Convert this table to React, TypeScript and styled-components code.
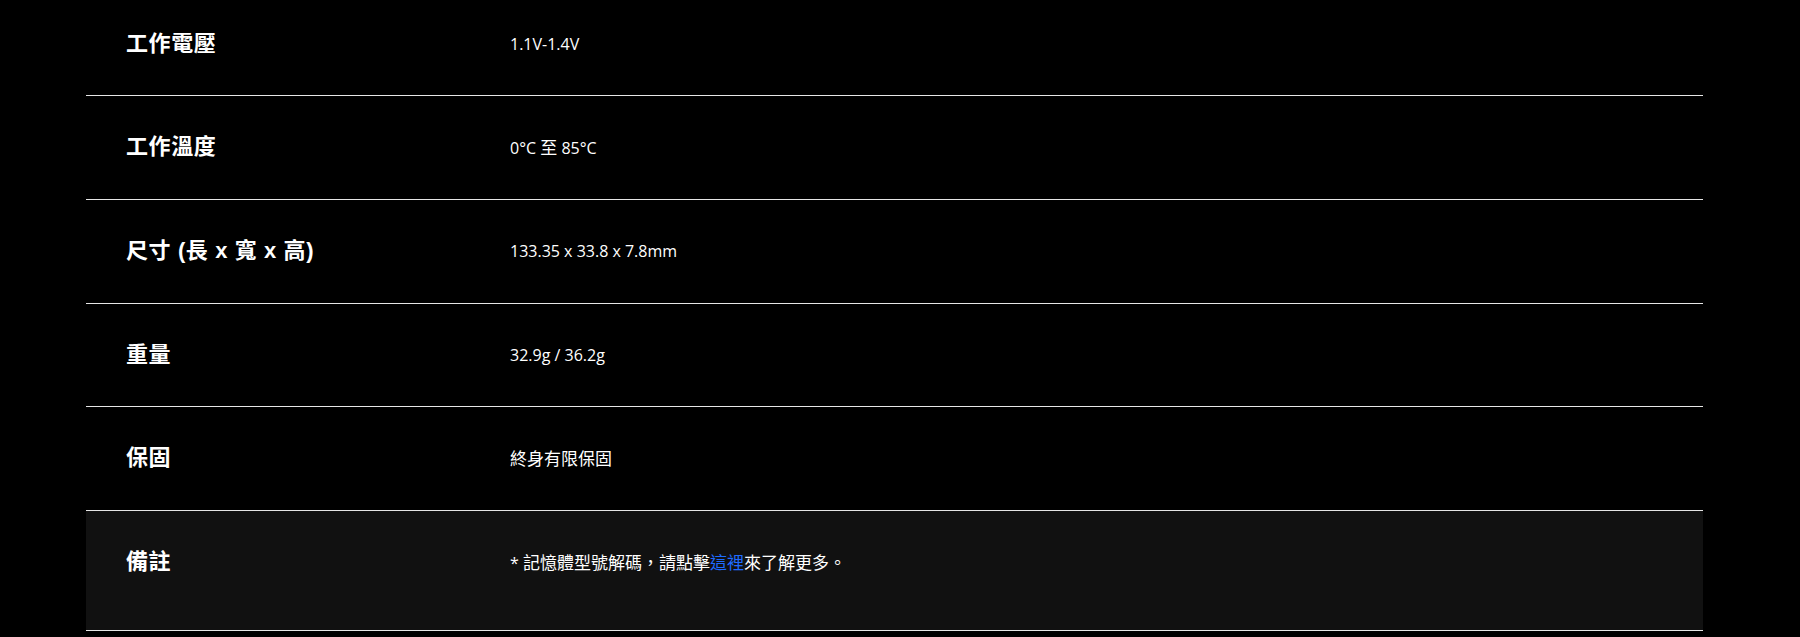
import React from "react";
import styled, { createGlobalStyle } from "styled-components";

const GlobalStyle = createGlobalStyle`
  html, body {
    margin: 0;
    padding: 0;
    background: #000;
    overflow: hidden;
  }
  body {
    font-family: "Open Sans", "Noto Sans CJK TC", sans-serif;
    color: #fff;
  }
`;

const Page = styled.div`
  width: 1800px;
  height: 637px;
  background: #000;
  overflow: hidden;
`;

const Table = styled.div`
  margin-top: -7.4px;
  margin-left: 86px;
  width: 1617px;
  display: flex;
  flex-direction: column;
`;

const Row = styled.div<{ $note?: boolean }>`
  display: grid;
  grid-template-columns: 424px 1fr;
  align-items: start;
  padding: 35px 0 ${(p) => (p.$note ? "51px" : "35px")};
  border-bottom: 1px solid #e6e6e6;
  background: ${(p) => (p.$note ? "#111111" : "transparent")};
`;

const Label = styled.div`
  height: 32.7px;
  padding-left: 40px;
  font-family: "Liberation Sans", "Noto Sans CJK TC", sans-serif;
  font-weight: 700;
  font-size: 22px;
  line-height: 32.7px;
  color: #fff;
  letter-spacing: 0.6px;
  white-space: nowrap;
`;

const Value = styled.div`
  height: 32.7px;
  font-family: "Open Sans", "Noto Sans CJK TC", sans-serif;
  font-size: 16px;
  line-height: 32.7px;
  color: #fff;
  white-space: nowrap;
`;

const Cjk = styled.span`
  font-family: "Noto Sans CJK TC", sans-serif;
  font-size: 17px;
`;

const Link = styled.a`
  color: #1f6bff;
  text-decoration: none;
`;

export default function App() {
  return (
    <Page>
      <GlobalStyle />
      <Table>
        <Row>
          <Label>工作電壓</Label>
          <Value>1.1V-1.4V</Value>
        </Row>
        <Row>
          <Label>工作溫度</Label>
          <Value>
            0°C <Cjk>至</Cjk> 85°C
          </Value>
        </Row>
        <Row>
          <Label>尺寸 (長 x 寬 x 高)</Label>
          <Value>133.35 x 33.8 x 7.8mm</Value>
        </Row>
        <Row>
          <Label>重量</Label>
          <Value>32.9g / 36.2g</Value>
        </Row>
        <Row>
          <Label>保固</Label>
          <Value>
            <Cjk>終身有限保固</Cjk>
          </Value>
        </Row>
        <Row $note>
          <Label>備註</Label>
          <Value>
            * <Cjk>記憶體型號解碼，請點擊</Cjk>
            <Link href="#">
              <Cjk>這裡</Cjk>
            </Link>
            <Cjk>來了解更多。</Cjk>
          </Value>
        </Row>
      </Table>
    </Page>
  );
}
